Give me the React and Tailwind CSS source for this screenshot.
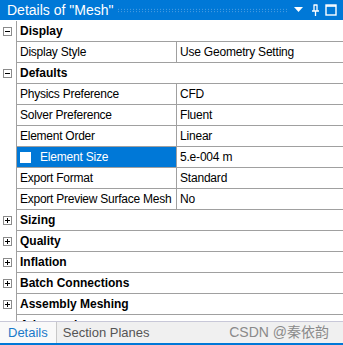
import React from 'react';

const font = { fontFamily: '"Liberation Sans", Arial, sans-serif' };

const rows = [
  { type: 'group', label: 'Display', open: true },
  { label: 'Display Style', value: 'Use Geometry Setting' },
  { type: 'group', label: 'Defaults', open: true },
  { label: 'Physics Preference', value: 'CFD' },
  { label: 'Solver Preference', value: 'Fluent' },
  { label: 'Element Order', value: 'Linear' },
  { label: 'Element Size', value: '5.e-004 m', selected: true },
  { label: 'Export Format', value: 'Standard' },
  { label: 'Export Preview Surface Mesh', value: 'No' },
  { type: 'group', label: 'Sizing' },
  { type: 'group', label: 'Quality' },
  { type: 'group', label: 'Inflation' },
  { type: 'group', label: 'Batch Connections' },
  { type: 'group', label: 'Assembly Meshing' },
  { type: 'group', label: 'Advanced' },
];

const Toggle = ({ open }) => (
  <div className="w-[9px] h-[9px] border border-[#8a8a8a] bg-white flex items-center justify-center">
    <svg width="7" height="7" viewBox="0 0 7 7">
      <path d="M1 3.5h5" stroke="#000" strokeWidth="1" />
      {!open && <path d="M3.5 1v5" stroke="#000" strokeWidth="1" />}
    </svg>
  </div>
);

const Row = ({ row }) => {
  if (row.type === 'group') {
    return (
      <div className="flex h-[21px] shrink-0">
        <div className="w-[16px] flex items-center justify-center pr-[1px]">
          <Toggle open={row.open} />
        </div>
        <div className="flex-1 border-l border-b border-[#a0a0a0] flex items-center pl-[3px] text-[12px] font-bold text-black">
          {row.label}
        </div>
      </div>
    );
  }
  return (
    <div className="flex h-[21px] shrink-0">
      <div className="w-[16px]" />
      <div className="flex-1 border-l border-b border-[#a0a0a0] flex">
        {row.selected ? (
          <div className="w-[159px] bg-[#0078d7] flex items-center pl-[3px] gap-[9px] text-white text-[12px] tracking-[-0.2px]">
            <div className="w-[11px] h-[11px] bg-white" />
            <span>{row.label}</span>
          </div>
        ) : (
          <div className="w-[159px] flex items-center pl-[3px] text-[12px] tracking-[-0.25px] text-black whitespace-nowrap">
            {row.label}
          </div>
        )}
        <div className="flex-1 border-l border-[#a0a0a0] flex items-center pl-[3px] text-[12px] tracking-[-0.2px] text-black">
          {row.value}
        </div>
      </div>
    </div>
  );
};

export default function App() {
  return (
    <div className="w-[343px] h-[345px] bg-white flex flex-col overflow-hidden" style={font}>
      {/* Title bar */}
      <div className="h-[20px] bg-[#0078d7] flex items-center pl-[7px] pr-[6px] shrink-0">
        <span className="text-white text-[14px] whitespace-nowrap">Details of "Mesh"</span>
        <div className="flex-1 h-[5px] mx-[4px] bg-[radial-gradient(circle,#5ea6e4_0.7px,transparent_0.8px)] bg-[length:3px_2.5px]" />
        <svg width="9" height="6" viewBox="0 0 9 6" className="ml-[1px]">
          <path d="M0 0h9L4.5 5z" fill="#fff" />
        </svg>
        <svg width="9" height="13" viewBox="0 0 9 13" className="ml-[8px]">
          <path d="M2.5 1h4M3 1v6M6 1v6M1 7h7M4.5 7v5" stroke="#fff" strokeWidth="1.3" fill="none" />
        </svg>
        <svg width="12" height="12" viewBox="0 0 12 12" className="ml-[5px]">
          <rect x="1" y="1" width="10" height="10" stroke="#fff" strokeWidth="1.4" fill="none" />
          <path d="M1 2h10" stroke="#fff" strokeWidth="1.6" />
        </svg>
      </div>

      {/* Property grid */}
      <div className="flex-1 min-h-0 overflow-hidden flex flex-col pt-[1px]">
        {rows.map((r) => (
          <Row key={r.label} row={r} />
        ))}
      </div>

      {/* Tabs */}
      <div className="h-[22px] shrink-0 bg-[#f0f0f0] border-t border-[#c8c8d8] flex items-stretch text-[13px]">
        <div className="bg-[#f9f9f9] border-r border-[#c8c8c8] px-[8px] flex items-center text-[#1979ca]">
          Details
        </div>
        <div className="px-[6px] flex items-center text-[#555]">Section Planes</div>
        <div className="ml-auto mr-[14px] flex items-center text-[#8a8a8a] text-[14px]" style={{ fontFamily: '"Liberation Sans", "Noto Sans CJK SC", sans-serif' }}>
          CSDN @秦依韵
        </div>
      </div>
      <div className="h-[2px] shrink-0 bg-[#0078d7]" />
    </div>
  );
}
